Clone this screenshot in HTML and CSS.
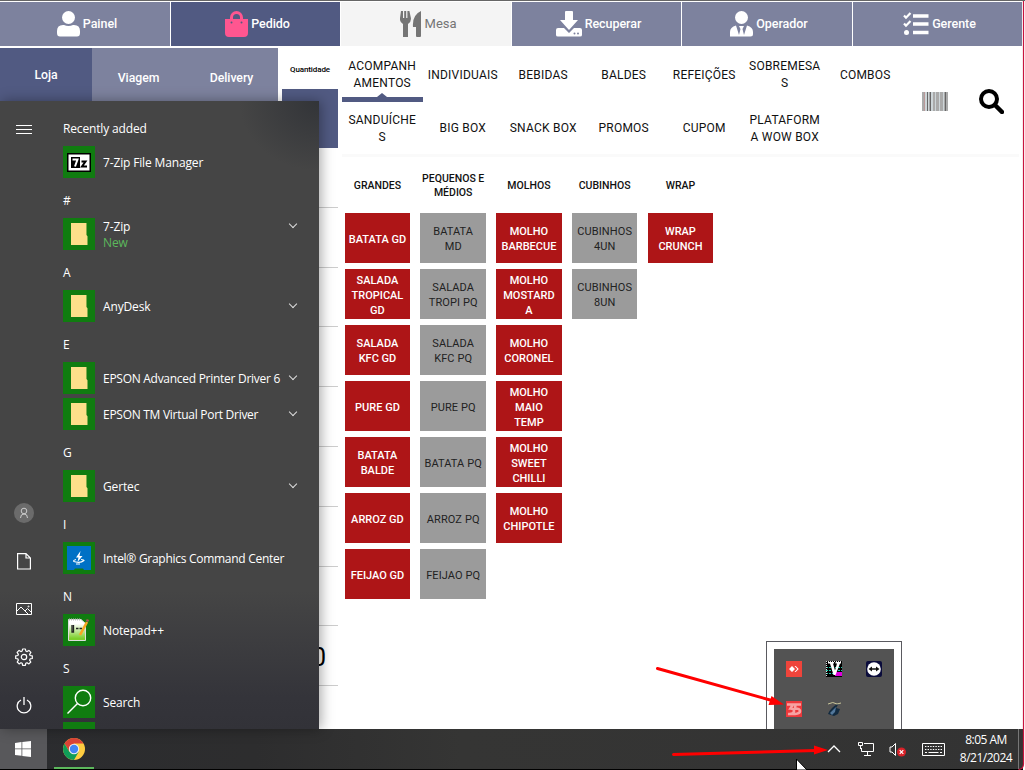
FILE: index.html
```
<!DOCTYPE html>
<html lang="pt">
<head>
<meta charset="utf-8">
<title>Pedido</title>
<link rel="stylesheet" href="styles.css">
</head>
<body>
<div class="screen">
  <nav class="nav">
    <div class="nav-item"><svg width="23" height="26" viewBox="0 0 23 26" fill="#fff"><circle cx="11.5" cy="6.5" r="6.5"/><path d="M0 22v-2q0-6 6-6h1q4.500 2 9 0h1q6 0 6 6v2q0 3.500-3 3.500H3q-3 0-3-3.500z"/></svg><span>Painel</span></div>
    <div class="nav-item active"><svg width="23" height="26" viewBox="0 0 23 26"><path fill="#ff5690" d="M0 8h5V6.500a6.500 6.500 0 0 1 13 0V8h5v14q0 4-4 4H4q-4 0-4-4zM8 8h7V6.500a3.500 3.500 0 0 0-7 0z"/><circle cx="6.500" cy="11.500" r="1" fill="#515a82"/><circle cx="16.500" cy="11.500" r="1" fill="#515a82"/></svg><span>Pedido</span></div>
    <div class="nav-item light"><svg width="22" height="26" viewBox="0 0 22 26" fill="#757575"><path d="M1 0h2v7h1.200V0h2v7h1.200V0h2l1.500 7q.5 4-2.900 6v13H3V13Q-.5 11 0 7zM21 0v25q0 1-1 1h-3q-1 0-1-1v-9h-3Q12 4 21 0z"/></svg><span>Mesa</span></div>
    <div class="nav-item"><svg width="26" height="26" viewBox="0 0 26 26"><path fill="#fff" d="M10 0h6q1 0 1 1v8h5l-9 10L4 9h5V1q0-1 1-1zM0 19q0-2 2-2h6l5 5 5-5h6q2 0 2 2v5q0 1.500-2 1.500H2Q0 25.500 0 24z"/><circle cx="18.500" cy="22.500" r="1" fill="#7d829e"/><circle cx="22" cy="22.500" r="1" fill="#7d829e"/></svg><span>Recuperar</span></div>
    <div class="nav-item"><svg width="23" height="26" viewBox="0 0 23 26"><circle cx="11.500" cy="6.500" r="6.500" fill="#fff"/><path fill="#fff" d="M0 25.500V21q0-5 6-6.500L9 24l1.500-6-1.500-3h5l-1.500 3 1.500 6 3-9.500q6 1.500 6 6.500v2q0 2.500-2.500 2.500z"/></svg><span>Operador</span></div>
    <div class="nav-item"><svg width="26" height="26" viewBox="0 0 26 26" stroke="#fff" fill="none"><path stroke-width="3.400" d="M10 5h15.500M10 13h15.500M10 21.500h15.500"/><path stroke-width="2.200" d="M1 4.500l2 2.200L7.500 2M1 12.500l2 2.200L7.500 10"/><circle cx="3.500" cy="21.500" r="2.500" fill="#fff" stroke="none"/></svg><span>Gerente</span></div>
  </nav>

  <main class="app">
    <section class="order">
      <div class="order-tabs"><div class="order-tab current">Loja</div><div class="order-tab">Viagem</div><div class="order-tab">Delivery</div></div>
      <div class="qty">
        <div class="qty-title">Quantidade</div>
        <div class="qty-box"></div>
        <div class="qty-row"></div><div class="qty-row"></div><div class="qty-row"></div><div class="qty-row"></div><div class="qty-row"></div><div class="qty-row"></div><div class="qty-row"></div><div class="qty-row"></div>
        <div class="qty-row total">0</div>
      </div>
    </section>
    <section class="catalog">
      <div class="catalog-head">
        <div class="cats">
          <div class="cat selected">ACOMPANH<br>AMENTOS</div><div class="cat">INDIVIDUAIS</div><div class="cat">BEBIDAS</div><div class="cat">BALDES</div><div class="cat">REFEIÇÕES</div><div class="cat">SOBREMESA<br>S</div><div class="cat">COMBOS</div>
          <div class="cat">SANDUÍCHE<br>S</div><div class="cat">BIG BOX</div><div class="cat">SNACK BOX</div><div class="cat">PROMOS</div><div class="cat">CUPOM</div><div class="cat">PLATAFORM<br>A WOW BOX</div>
        </div>
        <div class="tools">
          <svg width="26" height="19" viewBox="0 0 26 19"><path fill="#aaa" d="M0 0h26v19H0z"/><path fill="#b99" d="M2 0h1v19H2z"/><path fill="#cdd5d8" d="M3 0h2v19H3zM6 0h1v19H6zM9 0h2v19H9zM13 0h1v19h-1zM17 0h1v19h-1zM21 0h1v19h-1z"/><path fill="#666" d="M5 0h1v19H5zM8 0h1v19H8zM23 0h1v19h-1z"/></svg>
          <svg width="25" height="25" viewBox="0 0 25 25" fill="none" stroke="#000"><circle cx="10" cy="10" r="8" stroke-width="4"/><path d="M16 16l7 7" stroke-width="4.500" stroke-linecap="round"/></svg>
        </div>
      </div>
      <div class="products">
        <div class="col"><h3>GRANDES</h3><div class="p">BATATA GD</div><div class="p">SALADA<br>TROPICAL<br>GD</div><div class="p">SALADA<br>KFC GD</div><div class="p">PURE GD</div><div class="p">BATATA<br>BALDE</div><div class="p">ARROZ GD</div><div class="p">FEIJAO GD</div></div>
        <div class="col gray"><h3>PEQUENOS E MÉDIOS</h3><div class="p">BATATA<br>MD</div><div class="p">SALADA<br>TROPI PQ</div><div class="p">SALADA<br>KFC PQ</div><div class="p">PURE PQ</div><div class="p">BATATA PQ</div><div class="p">ARROZ PQ</div><div class="p">FEIJAO PQ</div></div>
        <div class="col"><h3>MOLHOS</h3><div class="p">MOLHO<br>BARBECUE</div><div class="p">MOLHO<br>MOSTARD<br>A</div><div class="p">MOLHO<br>CORONEL</div><div class="p">MOLHO<br>MAIO<br>TEMP</div><div class="p">MOLHO<br>SWEET<br>CHILLI</div><div class="p">MOLHO<br>CHIPOTLE</div></div>
        <div class="col gray"><h3>CUBINHOS</h3><div class="p">CUBINHOS<br>4UN</div><div class="p">CUBINHOS<br>8UN</div></div>
        <div class="col"><h3>WRAP</h3><div class="p">WRAP<br>CRUNCH</div></div>
      </div>
    </section>
  </main>

  <footer class="taskbar">
    <div class="start"><svg width="16" height="16" viewBox="0 0 16 16" fill="#fff"><path d="M0 2l6.500-.9v6.400H0zM7.300 1L16 0v7.500H7.300zM0 8.300h6.500v6.500L0 14zM7.300 8.300H16V16l-8.700-1.100z"/></svg></div>
    <div class="chrome"><svg width="22" height="22" viewBox="0 0 22 22"><circle cx="11" cy="11" r="11" fill="#ffcd40"/><path fill="#db4437" d="M1.500 5.500A11 11 0 0 1 20.500 5.500H11L6.300 13.700z"/><path fill="#0f9d58" d="M1.500 5.500A11 11 0 0 0 11 22l4.700-8.200H6.300z"/><circle cx="11" cy="11" r="5.200" fill="#f1f1f1"/><circle cx="11" cy="11" r="4.200" fill="#4285f4"/></svg></div>
    <div class="tray">
      <svg class="t-up" width="14" height="8" viewBox="0 0 14 8" fill="none" stroke="#fff" stroke-width="1.300"><path d="M1 7l6-6 6 6"/></svg>
      <svg class="t-net" width="16" height="14" viewBox="0 0 16 14" fill="none" stroke="#fff"><path d="M6 1.500h9.500v8H3.500V6M.5.500h4v3h-4zM2.500 4v3M9.500 10v3M6 13.500h7"/></svg>
      <svg class="t-vol" width="18" height="15" viewBox="0 0 18 15"><path d="M1 5h2l3.500-3.500v12L3 10H1z" fill="none" stroke="#fff"/><circle cx="12.500" cy="10" r="4.500" fill="#d92128"/><path d="M10.700 8.200l3.600 3.600m0-3.600l-3.600 3.600" stroke="#fff" stroke-width="1.200"/></svg>
      <svg class="t-kbd" width="23" height="13" viewBox="0 0 23 13" fill="none" stroke="#fff"><path d="M.5.500h22v12H.500z"/><path d="M3 3.500h17M3 6.500h17" stroke-dasharray="1.400 1.200"/><path d="M3 9.500h2M6.500 9.500h10M18 9.500h2"/></svg>
      <div class="clock">8:05 AM<br>8/21/2024</div>
    </div>
  </footer>

  <aside class="menu">
    <div class="rail">
      <div class="rail-i"><svg width="16" height="11" viewBox="0 0 16 11" stroke="#fff"><path d="M0 1.500h16M0 5.500h16M0 9.500h16"/></svg></div>
      <div class="rail-i push"><svg width="20" height="20" viewBox="0 0 20 20" fill="none" stroke="#ccc"><circle cx="10" cy="10" r="10" fill="#6b6b6b" stroke="none"/><circle cx="10" cy="8" r="2.800"/><path d="M6.500 15q0-4 3.500-4t3.500 4"/></svg></div>
      <div class="rail-i"><svg width="14" height="17" viewBox="0 0 14 17" fill="none" stroke="#fff" stroke-width="1.200"><path d="M.6.600H9L13.400 5v11H.6zM9 .6V5h4.400"/></svg></div>
      <div class="rail-i"><svg width="16" height="12" viewBox="0 0 16 12" fill="none" stroke="#fff"><path d="M.5.500h15v11H.5zM1 8l4-4 7 7M9 8l2.500-2.500L15 9"/><circle cx="12.500" cy="3.500" r=".5"/></svg></div>
      <div class="rail-i"><svg width="18" height="18" viewBox="0 0 18 18" fill="none" stroke="#fff" stroke-width="1.200"><path stroke-linejoin="round" d="M7.600 1h2.800l.4 2 1.300.6L13.900 2.400l2 2-1.300 1.900.5 1.200 2.200.4v2.600l-2.200.4-.5 1.300 1.200 1.800-1.900 1.900-1.900-1.200-1.200.5-.4 2.200H7.600l-.4-2.200-1.200-.5-1.900 1.200-1.900-1.900 1.200-1.800-.5-1.300-2.200-.4V7.900l2.200-.4.500-1.200L2.100 4.400l2-2L5.900 3.600 7.200 3z"/><circle cx="9" cy="9" r="2.700"/></svg></div>
      <div class="rail-i"><svg width="16" height="17" viewBox="0 0 16 17" fill="none" stroke="#fff" stroke-width="1.300"><path d="M5 3a6.800 6.800 0 1 0 6 0M8 0v8"/></svg></div>
    </div>
    <div class="apps">
      <div class="letter">Recently added</div>
      <div class="item"><i class="tile"><svg width="24" height="19" viewBox="0 0 24 19"><path fill="#000" d="M0 0h24v19H0z"/><path fill="#fff" d="M1.500 1.500h21v16h-21z"/><path fill="#000" d="M4 4h9v11H4z"/><path fill="none" stroke="#fff" stroke-width="2" d="M5.500 6.500h5l-2.500 7"/><path fill="none" stroke="#000" stroke-width="2" d="M14.500 8.500h4l-3.500 5h5"/></svg></i><span>7-Zip File Manager</span></div>
      <div class="letter">#</div>
      <div class="item folder"><i class="tile"></i><span>7-Zip<br><em>New</em></span><b class="chev high"></b></div>
      <div class="letter">A</div>
      <div class="item folder"><i class="tile"></i><span>AnyDesk</span><b class="chev"></b></div>
      <div class="letter">E</div>
      <div class="item folder"><i class="tile"></i><span class="tight">EPSON Advanced Printer Driver 6</span><b class="chev"></b></div>
      <div class="item folder"><i class="tile"></i><span class="tight">EPSON TM Virtual Port Driver</span><b class="chev"></b></div>
      <div class="letter">G</div>
      <div class="item folder"><i class="tile"></i><span>Gertec</span><b class="chev"></b></div>
      <div class="letter">I</div>
      <div class="item"><i class="tile"><svg width="24" height="24" viewBox="0 0 24 24"><path fill="#0071c5" d="M0 0h24v24h-7l-1-1.500H8L7 24H0z"/><path fill="#fff" d="M13.500 5L9 11.500h2.500L10.500 16l5-6H12.500z"/><path fill="none" stroke="#fff" stroke-width="1.200" d="M9 13.500q-5 1.500 0 2.500t8-1.500q0-1-3-1M9 18h4"/></svg></i><span class="tight">Intel® Graphics Command Center</span></div>
      <div class="letter">N</div>
      <div class="item"><i class="tile"><svg width="24" height="24" viewBox="0 0 24 24"><defs><linearGradient id="np" x2="0" y2="1"><stop offset=".2" stop-color="#fff"/><stop offset=".9" stop-color="#7dcf2c"/></linearGradient></defs><path fill="url(#np)" stroke="#ddd" d="M1.500 1.500H14l4.500 4v17h-17z"/><path stroke="#bbb" stroke-width="2" stroke-dasharray="1 1" d="M2 1.500h12"/><path fill="none" stroke="#222" stroke-width="1.300" d="M5 7v7h1.500V7M9 10.500h2.500M12.500 10.500H15"/><path stroke="#f5a623" stroke-width="2.600" d="M20 4l-7 13"/><path stroke="#a55" stroke-width="2.600" d="M21 1.500l-1 2"/></svg></i><span>Notepad++</span></div>
      <div class="letter">S</div>
      <div class="item"><i class="tile"><svg width="26" height="26" viewBox="0 0 26 26" fill="none" stroke="#fff" stroke-width="1.400"><circle cx="17" cy="9" r="7.700"/><path d="M11.500 14.500L1.500 24.500"/></svg></i><span>Search</span></div>
      <div class="item"><i class="tile"></i></div>
    </div>
  </aside>

  <div class="popup"><div class="popup-in">
    <svg width="16" height="16" viewBox="0 0 16 16"><path fill="#ef443b" d="M0 0h16v16H0z"/><path fill="#fff" d="M3 8l3-3 3 3-3 3zM8.500 5h1.200l3 3-3 3H8.500l2.800-3z"/></svg>
    <svg width="16" height="16" viewBox="0 0 16 16"><path fill="#000" d="M0 0h16v16H0z"/><path stroke="#18cfae" stroke-dasharray="2 1" d="M0 6.500h16M0 9.500h16M0 12.500h8"/><path fill="#d0d" d="M9 11h7v4H9z"/><path stroke="#ddd" stroke-dasharray="1 1" d="M0 .5h16M.5 0v16"/><path fill="#fff" d="M2 1h6v1.500H7l2 7 2-7H9.500V1H15v1.500h-1L9.500 14h-2L4 2.500H2z"/></svg>
    <svg width="16" height="16" viewBox="0 0 16 16"><rect width="16" height="16" rx="2" fill="#0b0c3b"/><circle cx="8" cy="8" r="6.800" fill="#fff"/><path fill="#111" d="M2.500 8L6 5.500v1.700h4V5.500L13.500 8 10 10.500V8.800H6v1.700z"/></svg>
    <svg width="16" height="16" viewBox="0 0 16 16"><path fill="#ec383b" d="M0 0h16v16H0z"/><path fill="none" stroke="#f6a3a3" stroke-width="2.600" d="M1 3.500h6L4.500 7.500q4 0 3.500 3t-6 2.500M15 3.500H9.500L9 7.500q5 0 5 2.500t-5 3H5"/></svg>
    <svg width="16" height="16" viewBox="0 0 16 16"><path fill="#132b40" d="M2 13Q4 7 13 2L10 7l4 1-2 5-4 2z"/><path fill="#53789c" d="M4 12l6-6-1 5-3 3z"/><path fill="none" stroke="#c9c69a" d="M2 3q5-3 9 0l4-1"/></svg>
  </div></div>

  <svg class="marks" width="1025" height="770" viewBox="0 0 1025 770">
    <path d="M657.500 668.500L772 700.500M673.500 754.500L816 750.500" stroke="#f00" stroke-width="3" stroke-linecap="round"/>
    <path fill="#f00" d="M784 704.500l-15.500 .5 3-9zM828 750l-14 4.500v-9z"/>
    <path d="M796.500 770V759l10.500 11z" fill="#fff" stroke="#000"/>
    <path d="M1023.500 0V764q0 5-5 5.500" fill="none" stroke="#c8143e" stroke-width="1.200"/>
  </svg>
</div>
</body>
</html>
```
FILE: styles.css
```
* { box-sizing: border-box; }
body { margin: 0; font-family: Roboto, "Liberation Sans", sans-serif; background: #fff; }
.screen { position: relative; width: 1025px; height: 770px; overflow: hidden; display: flex; flex-direction: column; border-top: 1px solid #666; background: #fff; }
svg { display: block; flex: none; }

.nav { display: grid; grid-template-columns: 170px 169px 170px 169px 170px 169px; column-gap: 1px; height: 46px; padding: 1px 0; flex: none; }
.nav-item { display: flex; align-items: center; justify-content: center; gap: 3px; background: #7d829e; color: #fff; font-size: 12.500px; font-weight: 500; padding: 0 0 1px 4px; letter-spacing: -.05px; }
.nav-item.active { background: #515a82; }
.nav-item.light { background: #f4f4f4; color: #757575; font-weight: 400; font-size: 13px; }

.app { flex: 1; display: flex; min-height: 0; padding-top: 1px; }
.order { width: 342px; display: flex; gap: 4px; }
.order-tabs { width: 278px; height: 60px; display: grid; grid-template-columns: 92px 93px 93px; background: #7d829e; color: #fff; font-size: 12.300px; font-weight: 500; letter-spacing: -.05px; }
.order-tab { text-align: center; padding-top: 23px; }
.order-tab.current { background: #515a82; padding-top: 20px; }
.qty { width: 56px; background: #fff; }
.qty-title { height: 41px; font-size: 8px; font-weight: 500; text-align: center; line-height: 43px; letter-spacing: -.1px; white-space: nowrap; }
.qty-box { height: 59px; background: #515a82; }
.qty-row { height: 59.800px; border-bottom: 1px solid #ccc; }
.qty-row.total { font-size: 25px; line-height: 63px; text-align: right; padding-right: 12px; }

.catalog { flex: 1; }
.catalog-head { display: flex; height: 109px; margin-right: 6px; border-bottom: 3px solid #fafafa; }
.cats { width: 564px; display: grid; grid-template-columns: repeat(7, 80.500px); grid-template-rows: 54px 53px; }
.cat { display: flex; align-items: center; justify-content: center; text-align: center; font-size: 12px; line-height: 17px; letter-spacing: .22px; color: #111; }
.cat.selected { position: relative; border-bottom: 5px solid #515a82; padding-top: 4px; }
.cat.selected::after { content: ""; position: absolute; left: 35px; bottom: 0; border: 5px solid transparent; border-top: 0; border-bottom: 4px solid #515a82; }
.tools { flex: 1; display: flex; align-items: center; gap: 31px; padding-left: 16px; }

.products { display: grid; grid-template-columns: repeat(5, 65.500px); column-gap: 10.250px; padding: 7px 0 0 2.700px; }
.col { display: flex; flex-direction: column; gap: 6px; }
.col h3 { margin: 0 -4px; height: 43px; display: flex; align-items: center; justify-content: center; text-align: center; font-size: 10.500px; font-weight: 500; line-height: 14px; color: #111; }
.p { height: 50px; display: flex; align-items: center; justify-content: center; text-align: center; white-space: nowrap; background: #ae1517; color: #fff; font-size: 11px; font-weight: 500; line-height: 15px; padding-top: 2px; }
.gray .p { background: #9b9b9b; color: #222; font-weight: 400; letter-spacing: .1px; }

.taskbar { flex: none; height: 41px; width: 1023px; display: flex; background: linear-gradient(90deg, #2b2c2f, #2d2d2e 25%, #353534 45%, #333 100%); border-bottom: 1px solid #000; }
.start { width: 47px; padding-right: 1px; display: flex; align-items: center; justify-content: center; background: #58585b; }
.chrome { width: 40px; margin-left: 7px; padding-top: 2px; display: flex; align-items: center; justify-content: center; border-bottom: 2px solid #5cb85c; }
.tray { flex: 1; display: flex; align-items: center; justify-content: flex-end; color: #fff; }
.t-net { margin-left: 17px; }
.t-vol { margin-left: 15px; }
.t-kbd { margin-left: 15px; }
.clock { flex: none; width: 74px; height: 40px; margin-right: 4px; border-right: 1px solid #777; padding: 2px 0 0 9px; text-align: center; font: 12px/18px "Open Sans", sans-serif; letter-spacing: -.5px; }

.menu { position: absolute; left: 0; top: 100px; width: 319px; height: 628px; display: flex; overflow: hidden; color: #fff; background: radial-gradient(ellipse 80px 70px at 100% 0, #323438, transparent), linear-gradient(#454545 0, #454545 78%, #34343a 95%, #323238); box-shadow: 2px 0 12px rgba(0,0,0,.35); font: 12px/16px "Open Sans", sans-serif; letter-spacing: -.15px; }
.rail { width: 48px; display: flex; flex-direction: column; padding-top: 4px; }
.rail-i { height: 48px; flex: none; display: flex; align-items: center; justify-content: center; }
.push { margin-top: auto; }
.apps { flex: 1; padding: 7px 0 0 15px; }
.letter { height: 36px; padding-top: 13px; }
.item { height: 36px; display: flex; align-items: center; gap: 8px; white-space: nowrap; }
.item span { padding-top: 1px; }
.item .tight { letter-spacing: -.28px; }
.item em { font-style: normal; color: #5cb85c; }
.tile { width: 32px; height: 32px; flex: none; background: #107c10; display: flex; align-items: center; justify-content: center; }
.folder .tile::before { content: ""; width: 17px; height: 22px; background: #fddf8a; clip-path: polygon(0 0, 94% 0, 94% 54%, 100% 60%, 100% 100%, 0 100%); }
.chev { width: 6px; height: 6px; margin: -5px 23px 0 auto; border: solid #ddd; border-width: 0 1px 1px 0; transform: rotate(45deg); }
.chev.high { margin-top: -21px; }

.popup { position: absolute; left: 766px; top: 640px; width: 136px; height: 88px; padding: 7px; padding-bottom: 0; border: 1px solid #5a5a60; border-bottom: 0; background: #fff; }
.popup-in { height: 80px; background: #535353; display: grid; grid-template-columns: repeat(3, 40px); grid-template-rows: 40px 40px; place-items: center; }
.marks { position: absolute; left: 0; top: -1px; pointer-events: none; }
```
